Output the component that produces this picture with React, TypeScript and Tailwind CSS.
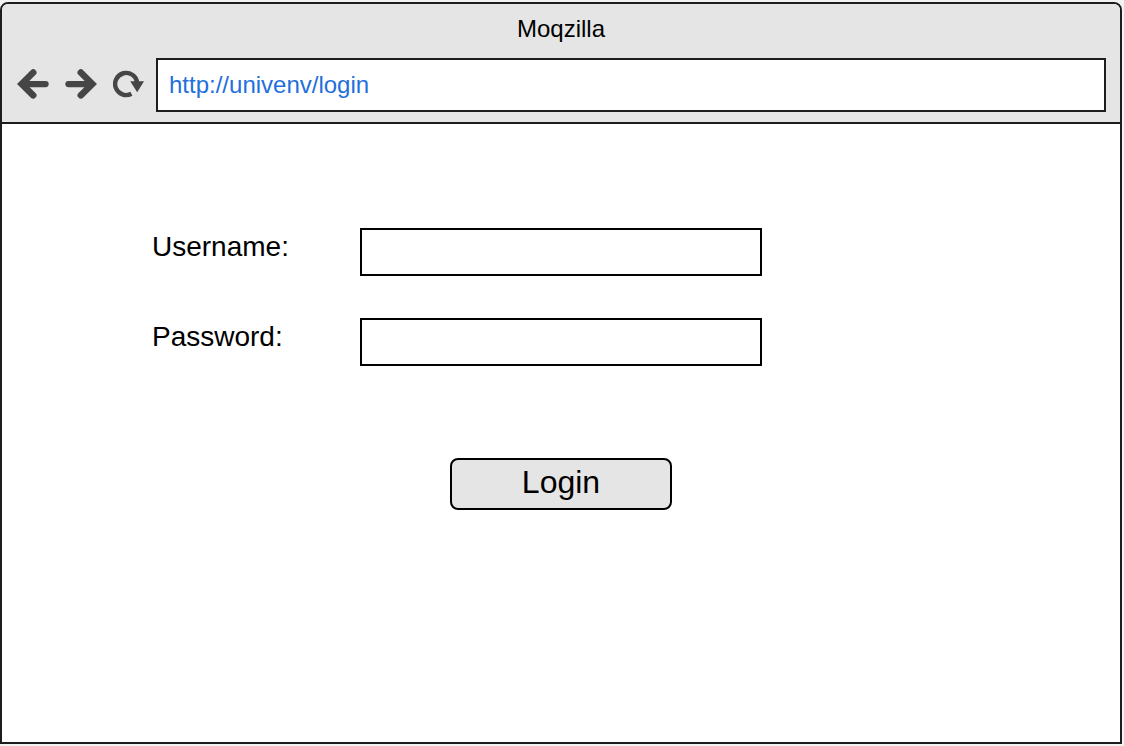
import { useState } from "react";

function ArrowLeftIcon({ className = "" }: { className?: string }) {
  return (
    <svg viewBox="0 0 32 32" className={`size-8 ${className}`} fill="none" stroke="currentColor" strokeLinecap="round" strokeLinejoin="miter" aria-hidden="true">
      <path d="M16.2 3.5 4.7 15 16.2 26.3" strokeWidth="6.6" />
      <path d="M6 15.1H28.6" strokeWidth="6.2" />
    </svg>
  );
}

function ReloadIcon() {
  return (
    <svg viewBox="0 0 32 32" className="size-8" fill="none" aria-hidden="true">
      <path d="M18.4 24.8A11.1 11.1 0 1 1 24.2 13.4" stroke="currentColor" strokeWidth="4.4" strokeLinecap="butt" />
      <path d="M17.2 12.2H31L24.2 23.2Z" fill="currentColor" />
    </svg>
  );
}

function Field({ id, label, type }: { id: string; label: string; type: string }) {
  return (
    <div className="flex items-start">
      <label htmlFor={id} className="w-52 shrink-0 text-[28px] leading-[38px]">
        {label}
      </label>
      <input
        id={id}
        type={type}
        className="h-12 w-full max-w-[402px] min-w-0 border-2 border-black bg-white px-2 text-2xl outline-none"
      />
    </div>
  );
}

export default function App() {
  const [url, setUrl] = useState("http://univenv/login");

  return (
    <div className="flex min-h-screen flex-col bg-[#f2f2f2] py-0.5 pr-0.5 font-['Liberation_Sans',Arial,sans-serif] text-black">
      <div className="flex grow flex-col overflow-hidden rounded-t-lg border-2 border-[#1d1d1f] bg-white">
        <header className="border-b-2 border-[#1d1d1f] bg-[#e5e5e5] pb-2.5">
          <h1 className="pb-1 text-center text-2xl leading-[50px]">Moqzilla</h1>
          <nav className="flex items-center gap-[11px] pr-3.5 pl-[15px]">
            <div className="flex shrink-0 items-center gap-4 text-[#464646]">
              <button type="button" aria-label="Back">
                <ArrowLeftIcon />
              </button>
              <button type="button" aria-label="Forward">
                <ArrowLeftIcon className="-scale-x-100" />
              </button>
              <button type="button" aria-label="Reload">
                <ReloadIcon />
              </button>
            </div>
            <input
              type="text"
              aria-label="Address"
              value={url}
              onChange={(e) => setUrl(e.target.value)}
              className="h-[54px] min-w-0 grow border-2 border-[#1d1d1f] bg-white px-[11px] text-2xl text-[#1f6fdc] outline-none"
            />
          </nav>
        </header>
        <main className="px-[150px] pt-[104px] pb-12">
          <form onSubmit={(e) => e.preventDefault()} className="flex flex-col gap-[42px]">
            <Field id="username" label="Username:" type="text" />
            <Field id="password" label="Password:" type="password" />
            <div className="flex w-full max-w-[818px] justify-center pt-[50px]">
              <button
                type="submit"
                className="h-[52px] w-[222px] rounded-lg border-2 border-black bg-[#e5e5e5] pb-1 text-[32px] leading-none"
              >
                Login
              </button>
            </div>
          </form>
        </main>
      </div>
    </div>
  );
}
